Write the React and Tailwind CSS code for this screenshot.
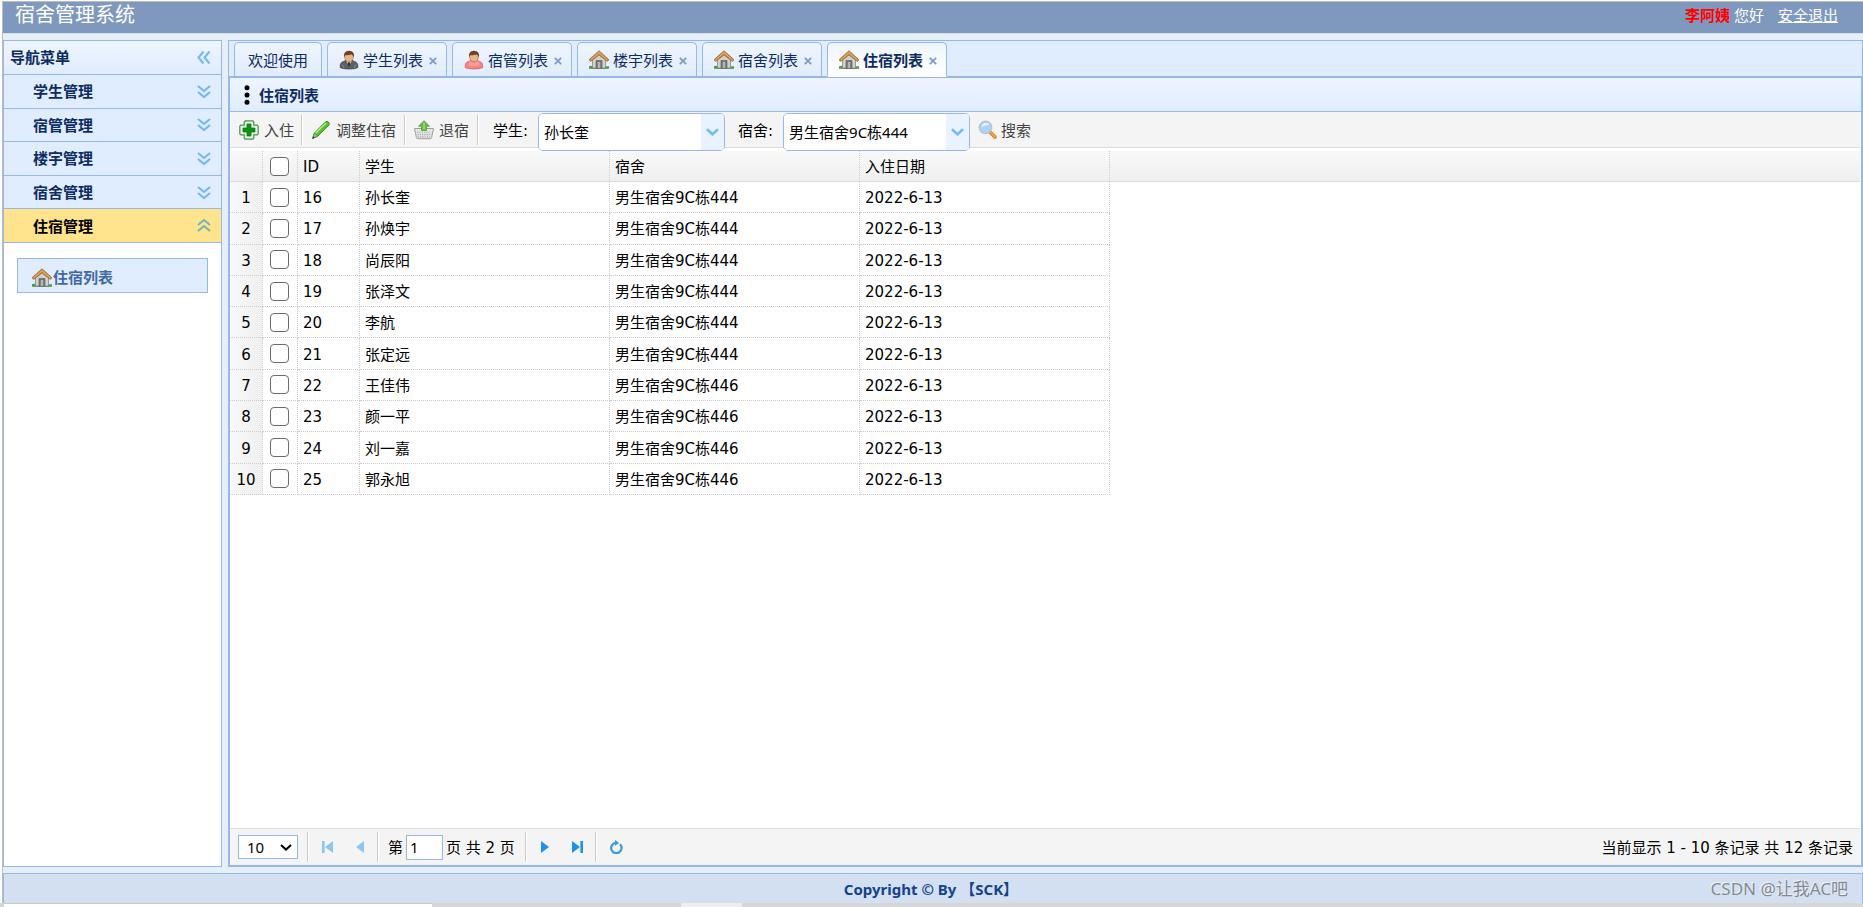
import React from "react";

const VERDANA = "font-['DejaVu_Sans','Noto_Sans_CJK_SC',sans-serif]";
const YAHEI = "font-['Noto_Sans','Noto_Sans_CJK_SC',sans-serif]";

function House() {
  return (
    <svg className="size-5 shrink-0" viewBox="0 0 20 20" aria-hidden="true">
      <path d="M0 16.2h20v2.2c-3 .9-17 .9-20 0z" fill="#6aa84f" />
      <path d="M0 16.6q2-1.8 4 0t3 .4v1.6H0zM13 17q2-1.6 3.600-.6T20 16.600v2h-7z" fill="#4f9a45" />
      <path d="M3.500 9.500L10 4l6.500 5.500V18h-13z" fill="#d0d0ce" stroke="#868686" strokeWidth=".8" />
      <path d="M7 10.500h6v7.800H7z" fill="#777" stroke="#5c5c5c" strokeWidth=".6" />
      <path d="M8.800 12h2.400v6H8.800z" fill="#b5b5b5" />
      <path d="M10 .8L.5 9.300q-.4 1.700 1.400 2L10 4.900l8.100 6.400q1.800-.3 1.400-2z" fill="#c98f48" stroke="#9a6429" strokeWidth=".8" strokeLinejoin="round" />
      <path d="M2 9.600L10 2.500l8 7.100" fill="none" stroke="#e8b676" strokeWidth=".9" />
    </svg>
  );
}

function Person({ female }) {
  return (
    <svg className="size-5 shrink-0" viewBox="0 0 20 20" aria-hidden="true">
      <path
        d="M1.200 17.500Q.7 12.500 4.500 11.500L7.500 10h5l3 1.500q3.800 1 3.300 6-2.500 1.500-8.800 1.500t-8.800-1.500z"
        fill={female ? "#f58585" : "#5d6066"}
        stroke={female ? "#d95f5f" : "#404348"}
        strokeWidth=".8"
      />
      {female ? (
        <path d="M6 11q4 3.500 8 0l1.500 4q-5.500 2.500-11 0z" fill="#ff9c9c" />
      ) : (
        <>
          <path d="M7 10.500l3 5 3-5z" fill="#d8dde4" />
          <path d="M9.300 12h1.400l.6 3-1.300 2-1.300-2z" fill="#33363b" />
          <path d="M3 14.500l2 3.500M17 14.500L15 18" stroke="#8b8f96" strokeWidth=".9" />
        </>
      )}
      <ellipse cx="10" cy="6.800" rx="4.400" ry="5" fill="#edb481" stroke="#a8703f" strokeWidth=".6" />
      <path d="M5.200 7.500Q4 .8 10 .8t4.800 6.700Q14 5 12.500 4.600 8 5.600 6.500 4.900 5.500 5.600 5.200 7.500z" fill="#6d4325" />
    </svg>
  );
}

function AddIcon() {
  return (
    <svg className="size-5 shrink-0" viewBox="0 0 20 20" aria-hidden="true">
      <path d="M6.200.8h7.600l1 1v3.400h3.400l1 1v7.600l-1 1h-3.400v3.400l-1 1H6.200l-1-1v-3.400H1.800l-1-1V6.200l1-1h3.400V1.800z" fill="#e2f1e2" stroke="#4a9150" strokeWidth="1.200" />
      <path d="M8 4h4v4h4v4h-4v4H8v-4H4V8h4z" fill="#109010" stroke="#0b7a12" strokeWidth=".7" />
    </svg>
  );
}

function PencilIcon() {
  return (
    <svg className="size-5 shrink-0" viewBox="0 0 20 20" aria-hidden="true">
      <path d="M1.500 18.500L3.500 13 14 2.300q2-1.600 3.500-.3t.3 3.300L7 16z" fill="#58c22c" stroke="#2f8a1c" strokeWidth=".9" strokeLinejoin="round" />
      <path d="M4.500 13.300L15 3" stroke="#b6ee8a" strokeWidth="1.300" />
      <path d="M1.500 18.500L3.500 13l3.500 3z" fill="#8fbf72" stroke="#4f7a44" strokeWidth=".6" />
      <path d="M1.500 18.500l.8-2.200 1.400 1.400z" fill="#333" />
    </svg>
  );
}

function BasketIcon() {
  return (
    <svg className="size-5 shrink-0" viewBox="0 0 20 20" aria-hidden="true">
      <path d="M.6 8.500h18.800v2.300h-.5l-1.300 6.900q-.2 1-1.200 1H3.600q-1 0-1.200-1L1.100 10.800H.6z" fill="#e6e6e6" stroke="#959595" strokeWidth=".9" />
      <path d="M3 12.300h14M3.400 14.600h13.200M3.800 16.900h12.400" stroke="#a9a9a9" strokeWidth="1.100" strokeDasharray="1.300 1" />
      <path d="M10 .7l5.500 5.500h-3v4.300h-5V6.200h-3z" fill="#69bd45" stroke="#4f9a3c" strokeWidth=".8" strokeLinejoin="round" />
      <path d="M10 2.500v7" stroke="#a5df86" strokeWidth="1.200" />
    </svg>
  );
}

function SearchIcon() {
  return (
    <svg className="size-5 shrink-0" viewBox="0 0 20 20" aria-hidden="true">
      <path d="M12.500 12.500l4.500 4.500" stroke="#c97a1a" strokeWidth="3.600" strokeLinecap="round" />
      <path d="M13 12.700l4 4" stroke="#f7a63a" strokeWidth="2.200" strokeLinecap="round" />
      <circle cx="7.500" cy="7.300" r="6.100" fill="#a9d4fb" stroke="#b9c4d2" strokeWidth="1.500" />
      <path d="M3.600 7q.5-4 4.400-4.200 2.500.2 3.200 2-4 .2-7.600 2.200z" fill="#e2f2ff" />
    </svg>
  );
}

function Chevrons({ dir }) {
  const d = {
    down: "M1 1l6 5 6-5M1 7l6 5 6-5",
    up: "M1 6l6-5 6 5M1 12l6-5 6 5",
    left: "M6.500.5L1.500 6.500l5 6M12.500.5l-5 6 5 6",
  }[dir];
  return (
    <svg className="h-[13px] w-[14px] shrink-0" viewBox="0 0 14 13" aria-hidden="true">
      <path d={d} fill="none" stroke={dir === "up" ? "#79b5b5" : "#72b9f2"} strokeWidth="2.100" />
    </svg>
  );
}

function Tab({ icon, label, active }) {
  return (
    <div
      className={
        "flex items-center rounded-t-[5px] border border-[#95b8e7] text-[15px] text-[#0e2d5f] " +
        (icon ? "w-[120px] pl-[11px] " : "w-[88px] justify-center ") +
        (active
          ? "h-[35px] border-b-white bg-linear-to-b from-[#eff5ff] to-white font-bold"
          : "h-[34px] border-b-0 bg-linear-to-b from-[#eff5ff] to-[#e0ecff]")
      }
    >
      {icon}
      <button type="button" className={icon ? "ml-1 pt-0.5 whitespace-nowrap" : "pt-0.5 whitespace-nowrap"}>{label}</button>
      {icon && (
        <button type="button" aria-label={"关闭" + label} className="mt-0.5 ml-1.5">
          <svg className="size-2" viewBox="0 0 8 8">
            <path d="M.8.8l6.400 6.400M7.200.8L.8 7.200" stroke="#7d9bcb" strokeWidth="1.800" />
          </svg>
        </button>
      )}
    </div>
  );
}

function Combo({ id, value }) {
  return (
    <div className="relative z-10 mt-px h-[38px] w-[187px] shrink-0 overflow-hidden rounded-[5px] border border-[#95b8e7] bg-white">
      <select id={id} className={"size-full appearance-none bg-white pl-[5px] text-[15px] text-black outline-none " + YAHEI}>
        <option>{value}</option>
      </select>
      <span className="pointer-events-none absolute inset-y-0 right-0 flex w-[23px] items-center justify-center bg-[#e9f2ff]">
        <svg className="h-2 w-[13px]" viewBox="0 0 13 8">
          <path d="M1 1.200l5.500 5 5.500-5" fill="none" stroke="#6fbcf3" strokeWidth="2.600" />
        </svg>
      </span>
    </div>
  );
}

function Sep() {
  return <span className="h-[30px] w-0.5 shrink-0 self-center border-l border-[#ccc] bg-white" />;
}

function Check({ label }) {
  return (
    <input
      type="checkbox"
      aria-label={label}
      className="block size-[19px] appearance-none rounded-[4px] border border-[#6b6b6b] bg-white checked:bg-[#0075ff]"
    />
  );
}

const menus = ["学生管理", "宿管管理", "楼宇管理", "宿舍管理", "住宿管理"];
const rows = [
  [16, "孙长奎", "男生宿舍9C栋444"],
  [17, "孙焕宇", "男生宿舍9C栋444"],
  [18, "尚辰阳", "男生宿舍9C栋444"],
  [19, "张泽文", "男生宿舍9C栋444"],
  [20, "李航", "男生宿舍9C栋444"],
  [21, "张定远", "男生宿舍9C栋444"],
  [22, "王佳伟", "男生宿舍9C栋446"],
  [23, "颜一平", "男生宿舍9C栋446"],
  [24, "刘一嘉", "男生宿舍9C栋446"],
  [25, "郭永旭", "男生宿舍9C栋446"],
];

const cell = "border-r border-b border-dotted border-[#ccc] px-[5px] pt-0.5 text-left font-normal";
const head = "border-r border-b border-[#ddd] [border-right-color:#ccc] [border-right-style:dotted] px-[5px] pt-0.5 text-left font-normal";

export default function App() {
  return (
    <div className={"flex h-screen flex-col bg-white text-[15px] leading-5 text-black " + VERDANA}>
      <div className="mt-px ml-0.5 flex min-h-0 flex-1 flex-col border-t border-l border-[#bcbcbc] bg-[#e6eef8]">
        <header className={"flex h-8 shrink-0 items-center justify-between border-b border-[#d5e0f0] bg-[#7f99be] pr-[25px] pb-1.5 pl-3 text-white " + YAHEI}>
          <h1 className="text-[20px] leading-6">宿舍管理系统</h1>
          <div className="flex items-center">
            <b className="text-[#f00]">李阿姨</b>
            <span className="ml-1">您好</span>
            <a href="#logout" className="ml-3.5 underline">安全退出</a>
          </div>
        </header>

        <div className="flex min-h-0 flex-1 gap-1.5 pt-1.5 pb-1.5">
          <aside className="flex w-[219px] shrink-0 flex-col border border-[#95b8e7] bg-white">
            <div className="flex h-[34px] shrink-0 items-center justify-between border-b border-[#95b8e7] bg-linear-to-b from-[#eff5ff] to-[#e0ecff] pr-2.5 pl-1.5 font-bold text-[#0e2d5f]">
              导航菜单
              <button type="button" aria-label="收起"><Chevrons dir="left" /></button>
            </div>
            <nav className="grid h-[168px] shrink-0 auto-rows-fr">
              {menus.map((m, i) => (
                <button
                  key={m}
                  type="button"
                  className={
                    "flex items-center justify-between border-b border-[#95b8e7] pr-2.5 pl-[29px] font-bold " +
                    (i === 4 ? "bg-[#ffe48d] text-black" : "bg-[#e0ecff] text-[#0e2d5f]")
                  }
                >
                  <span className="pt-0.5">{m}</span>
                  <Chevrons dir={i === 4 ? "up" : "down"} />
                </button>
              ))}
            </nav>
            <a href="#lodging" className="mx-[13px] mt-[15px] flex h-[35px] items-center border border-[#95b8e7] bg-[#e0ecff] pt-1 pl-3.5 font-bold text-[#416aa3]">
              <House />
              <span className="ml-px">住宿列表</span>
            </a>
          </aside>

          <main className="flex min-w-0 flex-1 flex-col border border-[#95b8e7] bg-white">
            <div className="flex h-9 shrink-0 items-end border-b border-[#95b8e7] bg-[#e0ecff] pl-[5px]">
              <div className="flex h-[34px] items-start gap-[5px]">
                <Tab label="欢迎使用" />
                <Tab icon={<Person />} label="学生列表" />
                <Tab icon={<Person female />} label="宿管列表" />
                <Tab icon={<House />} label="楼宇列表" />
                <Tab icon={<House />} label="宿舍列表" />
                <Tab icon={<House />} label="住宿列表" active />
              </div>
            </div>

            <section className="flex min-h-0 flex-1 flex-col border border-[#95b8e7]">
              <div className="flex h-[34px] shrink-0 items-center gap-[9px] border-b border-[#95b8e7] bg-linear-to-b from-[#eff5ff] to-[#e0ecff] pl-[14px] font-bold text-[#0e2d5f]">
                <svg className="h-5 w-[6px]" viewBox="0 0 6 20" aria-hidden="true">
                  <circle cx="3" cy="2.700" r="2.500" />
                  <circle cx="3" cy="10" r="2.500" />
                  <circle cx="3" cy="17.300" r="2.500" />
                </svg>
                <span className="pt-0.5">住宿列表</span>
              </div>

              <div className="mr-px flex h-9 shrink-0 border-b border-[#ddd] bg-[#f4f4f4] pl-[9px] text-[#444]">
                <button type="button" className="flex items-center gap-[5px] pr-[7px]"><AddIcon /><span className="pt-0.5">入住</span></button>
                <Sep />
                <button type="button" className="flex items-center gap-[5px] px-2"><PencilIcon /><span className="pt-0.5">调整住宿</span></button>
                <Sep />
                <button type="button" className="flex items-center gap-[5px] px-2"><BasketIcon /><span className="pt-0.5">退宿</span></button>
                <Sep />
                <label htmlFor="student" className="w-[59px] self-center pt-0.5 pl-[14px] text-black">学生:</label>
                <Combo id="student" value="孙长奎" />
                <label htmlFor="dorm" className="w-[58px] self-center pt-0.5 pl-[13px] text-black">宿舍:</label>
                <Combo id="dorm" value="男生宿舍9C栋444" />
                <button type="button" className="flex items-center gap-[3px] pl-2"><SearchIcon /><span className="pt-0.5">搜索</span></button>
              </div>

              <div className="mr-px min-h-0 flex-1 overflow-hidden pt-[3px]">
                <table className="h-[344px] w-full table-fixed border-separate border-spacing-0">
                  <colgroup>
                    <col className="w-[33px]" />
                    <col className="w-[35px]" />
                    <col className="w-[62px]" />
                    <col className="w-[250px]" />
                    <col className="w-[250px]" />
                    <col className="w-[250px]" />
                    <col />
                  </colgroup>
                  <thead>
                    <tr className="h-[31px] bg-linear-to-b from-[#f9f9f9] to-[#efefef]">
                      <th className={head} />
                      <th className="border-r border-b border-[#ddd] [border-right-color:#ccc] [border-right-style:dotted] py-0 pl-[7px]"><Check label="全选" /></th>
                      <th className={head}>ID</th>
                      <th className={head}>学生</th>
                      <th className={head}>宿舍</th>
                      <th className={head}>入住日期</th>
                      <th className="border-b border-[#ddd]" />
                    </tr>
                  </thead>
                  <tbody>
                    {rows.map(([id, name, dorm], i) => (
                      <tr key={id} className="h-[31px]">
                        <td className="border-r border-b border-dotted border-[#ccc] bg-linear-to-r from-[#f9f9f9] to-[#efefef] pt-0.5 text-center">{i + 1}</td>
                        <td className="border-r border-b border-dotted border-[#ccc] pl-[7px]"><Check label={"选择" + name} /></td>
                        <td className={cell}>{id}</td>
                        <td className={cell}>{name}</td>
                        <td className={cell}>{dorm}</td>
                        <td className={cell}>2022-6-13</td>
                        <td />
                      </tr>
                    ))}
                  </tbody>
                </table>
              </div>

              <div className="mr-px flex h-[37px] shrink-0 items-center border-t border-[#ddd] bg-[#f4f4f4] pl-2">
                <div className="relative">
                  <select aria-label="每页条数" className={"h-6 w-[60px] appearance-none border border-[#95b8e7] bg-white pl-2 text-[15px] " + YAHEI}>
                    <option>10</option>
                  </select>
                  <svg className="pointer-events-none absolute top-[9px] right-1.5 h-[7px] w-3" viewBox="0 0 12 7">
                    <path d="M1 1l5 4.600L11 1" fill="none" stroke="#000" strokeWidth="2" />
                  </svg>
                </div>
                <div className="ml-[9px] flex items-center">
                  <Sep />
                  <button type="button" aria-label="首页" className="ml-[13px]">
                    <svg className="h-3 w-[11px]" viewBox="0 0 11 12"><path d="M0 0h2.600v12H0zM11 0v12L3 6z" fill="#8cc6f2" /></svg>
                  </button>
                  <button type="button" aria-label="上一页" className="ml-[23px]">
                    <svg className="h-3 w-[8px]" viewBox="0 0 8 12"><path d="M8 0v12L0 6z" fill="#8cc6f2" /></svg>
                  </button>
                </div>
                <div className="ml-[13px] flex items-center">
                  <Sep />
                  <label htmlFor="page" className="ml-[9px] pt-0.5">第</label>
                  <input id="page" defaultValue="1" className={"ml-[3px] h-[25px] w-[37px] border border-[#95b8e7] bg-white pl-[3px] text-[15px] " + YAHEI} />
                  <span className="ml-[3px] pt-0.5">页 共 2 页</span>
                </div>
                <div className="ml-2.5 flex items-center">
                  <Sep />
                  <button type="button" aria-label="下一页" className="ml-[14px]">
                    <svg className="h-3 w-[8px]" viewBox="0 0 8 12"><path d="M0 0l8 6-8 6z" fill="#1c94ee" /></svg>
                  </button>
                  <button type="button" aria-label="末页" className="ml-[23px]">
                    <svg className="h-3 w-[11px]" viewBox="0 0 11 12"><path d="M8.400 0H11v12H8.400zM0 0l8 6-8 6z" fill="#1c94ee" /></svg>
                  </button>
                </div>
                <div className="ml-3 flex items-center">
                  <Sep />
                  <button type="button" aria-label="刷新" className="ml-3">
                    <svg className="size-[14px]" viewBox="0 0 14 14">
                      <path d="M11 4.200A5.200 5.200 0 1 1 6.600 2.800" fill="none" stroke="#3c9be0" strokeWidth="2.200" />
                      <path d="M6 0l4.200 2.900L6 5.800z" fill="#3c9be0" />
                    </svg>
                  </button>
                </div>
                <span className="ml-auto pt-0.5 pr-[7px]">当前显示 1 - 10 条记录 共 12 条记录</span>
              </div>
            </section>
          </main>
        </div>

        <footer className={"relative flex h-[30px] shrink-0 items-center justify-center border-x border-t border-[#95b8e7] bg-[#d2e0f2] pr-1 font-bold text-[#15428b] " + YAHEI}>
          Copyright © By 【SCK】
          <span className="absolute right-3.5 text-[17px] font-normal text-[#85898f] [text-shadow:-1px_-1px_0_#ffffffb0]">CSDN @让我AC吧</span>
        </footer>
      </div>
      <div className="flex h-1 shrink-0 bg-[#d6d6d6]">
        <span className="ml-1 w-[428px] border-t border-[#c8c8c8] bg-white" />
        <span className="ml-[249px] w-[61px] bg-[#eee]" />
      </div>
    </div>
  );
}
